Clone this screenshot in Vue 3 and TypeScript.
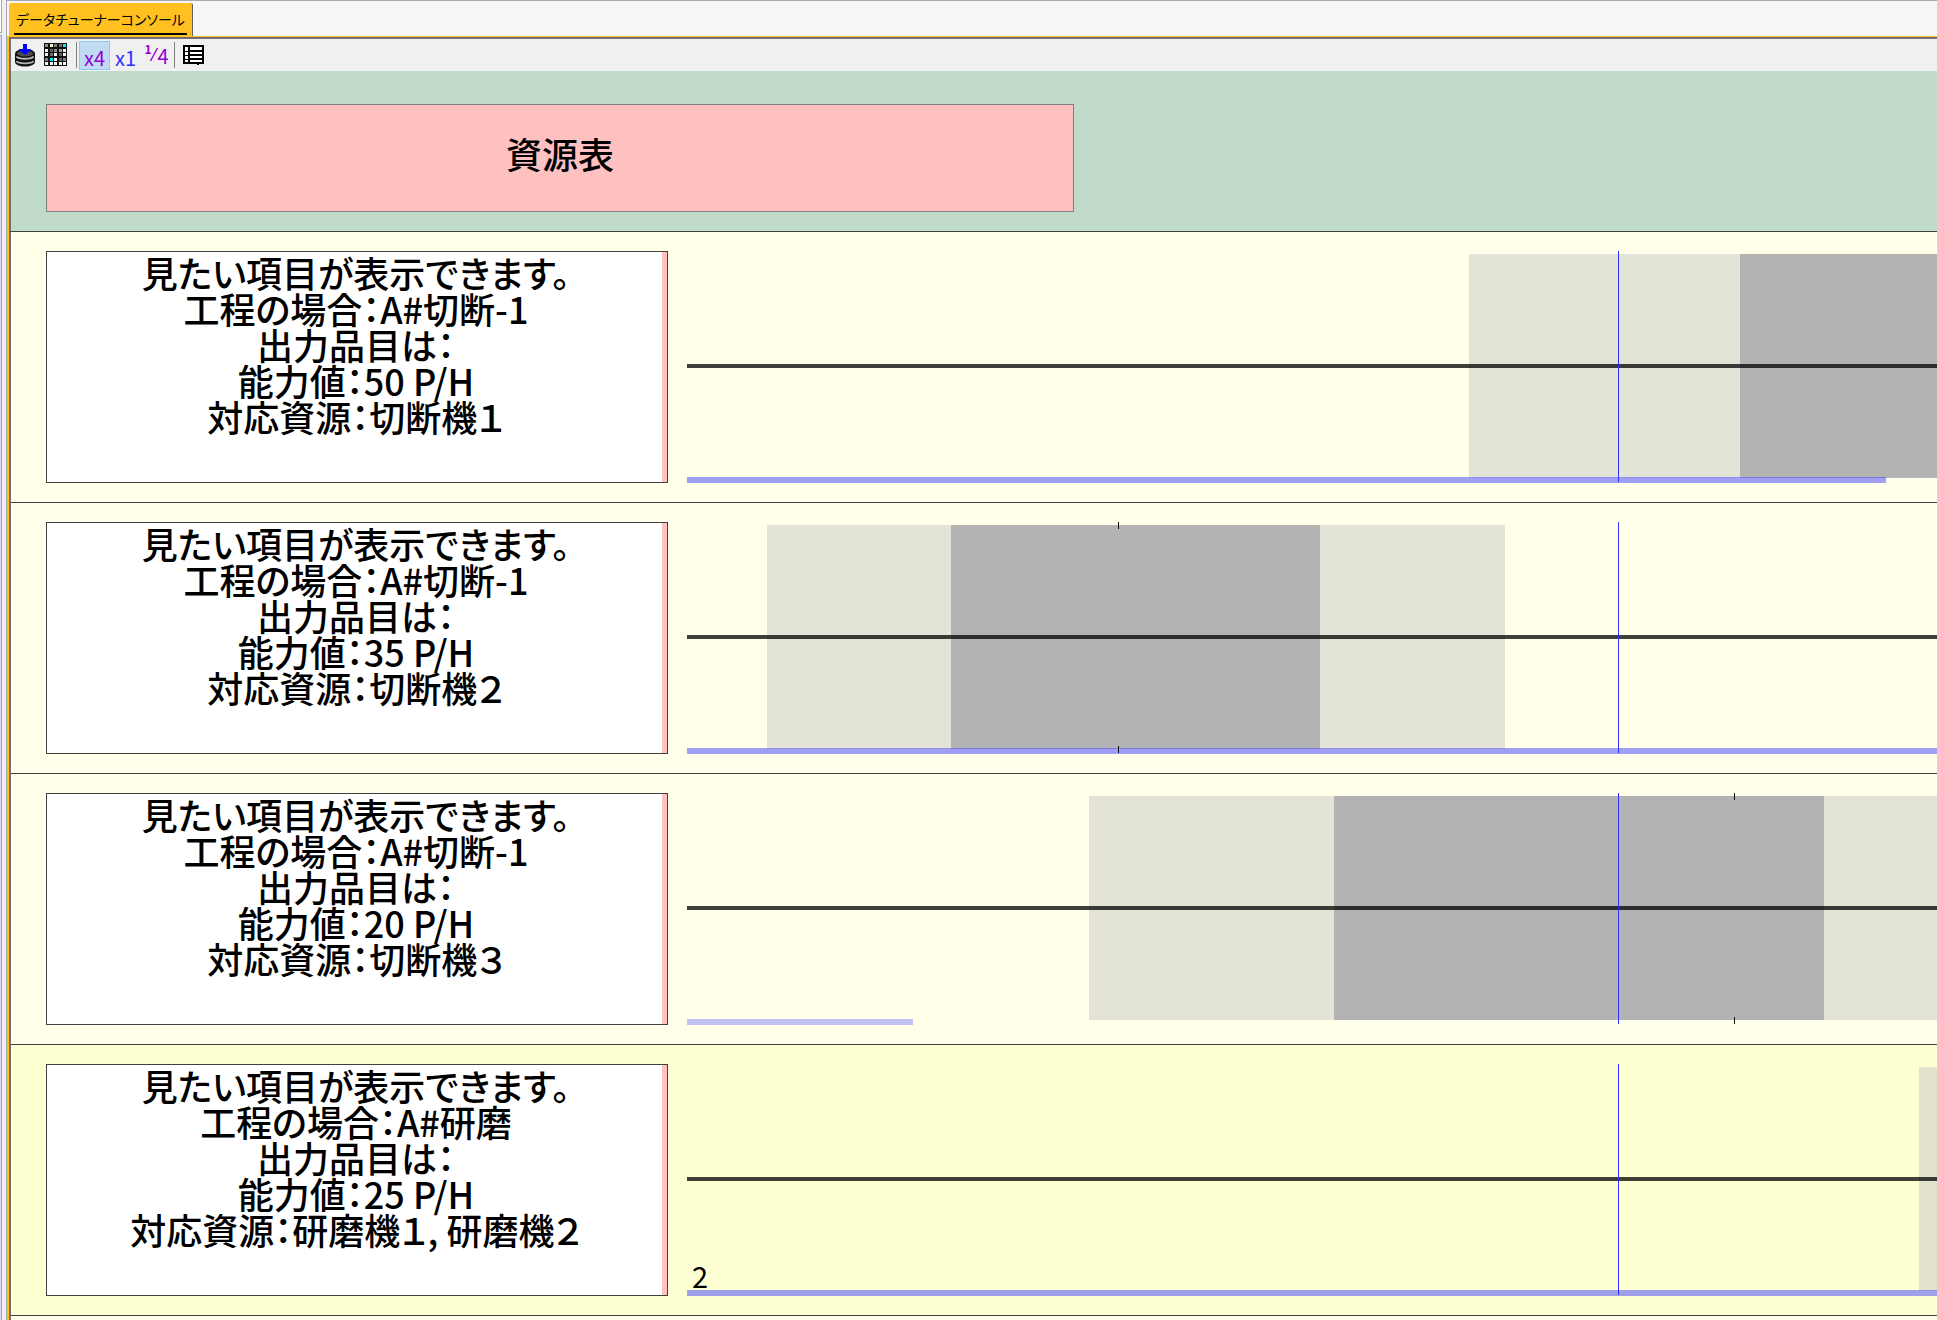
<script setup lang="ts">
import { ref } from 'vue'

type Shade = 'light' | 'dark'

interface Segment {
  start: number
  length: number
  shade: Shade
}

interface ResourceRow {
  id: number
  lines: string[]
  tinted: boolean
  segments: Segment[]
  load: { length: number; faint: boolean }
  ticks: number[]
  count: string
}

const FULL = 4000
const nowPosition = 931

const rows: ResourceRow[] = [
  {
    id: 1,
    lines: ['見たい項目が表示できます。', '工程の場合：A#切断-1', '出力品目は：', '能力値：50 P/H', '対応資源：切断機１'],
    tinted: false,
    segments: [
      { start: 782, length: 271, shade: 'light' },
      { start: 1053, length: FULL, shade: 'dark' },
    ],
    load: { length: 1199, faint: false },
    ticks: [],
    count: '',
  },
  {
    id: 2,
    lines: ['見たい項目が表示できます。', '工程の場合：A#切断-1', '出力品目は：', '能力値：35 P/H', '対応資源：切断機２'],
    tinted: false,
    segments: [
      { start: 80, length: 184, shade: 'light' },
      { start: 264, length: 369, shade: 'dark' },
      { start: 633, length: 185, shade: 'light' },
    ],
    load: { length: FULL, faint: false },
    ticks: [431],
    count: '',
  },
  {
    id: 3,
    lines: ['見たい項目が表示できます。', '工程の場合：A#切断-1', '出力品目は：', '能力値：20 P/H', '対応資源：切断機３'],
    tinted: false,
    segments: [
      { start: 402, length: 245, shade: 'light' },
      { start: 647, length: 490, shade: 'dark' },
      { start: 1137, length: FULL, shade: 'light' },
    ],
    load: { length: 226, faint: true },
    ticks: [1047],
    count: '',
  },
  {
    id: 4,
    lines: ['見たい項目が表示できます。', '工程の場合：A#研磨', '出力品目は：', '能力値：25 P/H', '対応資源：研磨機１, 研磨機２'],
    tinted: true,
    segments: [{ start: 1232, length: FULL, shade: 'light' }],
    load: { length: FULL, faint: false },
    ticks: [],
    count: '2',
  },
]

const scale = ref<'x4' | 'x1' | 'quarter'>('x4')

const W = '#f4f4ec'
const G = '#606060'
const gridCells: string[][] = [
  ['#909090', '#ffffd0', '#808080', '#707070', '#00f0ff'],
  [W, G, '#909090', '#a0a0a0', W],
  [W, '#707070', W, G, W],
  ['#808080', '#00f0ff', W, G, '#808080'],
  [W, W, W, W, W],
]
</script>

<template>
  <div class="app">
    <div class="rail" aria-hidden="true">
      <span class="rail-top"></span>
      <span class="rail-body"></span>
    </div>
    <div class="window">
      <nav class="tabs">
        <button type="button" class="tab"><span class="tab-text">データチューナーコンソール</span></button>
      </nav>
      <div class="pane">
        <div class="toolbar" role="toolbar">
          <button type="button" class="tool" aria-label="データ取込">
            <svg width="22" height="24" viewBox="0 0 22 24">
              <path d="M1 11v8c0 2.500 4.500 4.500 10 4.500s10-2 10-4.500v-8z" fill="#111" />
              <ellipse cx="11" cy="10.500" rx="10" ry="4.500" fill="#111" />
              <ellipse cx="11" cy="10.500" rx="8" ry="3" fill="#4c4c4c" />
              <path d="M2.500 13.500c2 3 15 3 17 0M2.500 18c2 3 15 3 17 0" fill="none" stroke="#b4b4b4" stroke-width="2" />
              <path d="M2 16.500c3 3 15 3 18 0" fill="none" stroke="#111" stroke-width="1" />
              <path d="M9 1h4v5h4l-1 2-5 4-5-4-1-2h4z" fill="#0000ff" />
            </svg>
          </button>
          <button type="button" class="tool" aria-label="グリッド">
            <svg width="24" height="24" viewBox="0 0 24 24" shape-rendering="crispEdges">
              <rect x="0" y="0" width="23" height="23" fill="#111" />
              <template v-for="(line, r) in gridCells" :key="r">
                <rect
                  v-for="(fill, c) in line"
                  :key="c"
                  :x="1 + c * 4.500"
                  :y="1 + r * 4.500"
                  width="3"
                  height="3"
                  :fill="fill"
                />
              </template>
            </svg>
          </button>
          <span class="divider"></span>
          <div class="zooms">
            <button type="button" class="zoom low violet" :class="{ active: scale === 'x4' }" @click="scale = 'x4'">x4</button>
            <button type="button" class="zoom low blue" :class="{ active: scale === 'x1' }" @click="scale = 'x1'">x1</button>
            <button type="button" class="zoom violet" :class="{ active: scale === 'quarter' }" @click="scale = 'quarter'">
              <span class="numerator">1</span>
              <svg class="slash" width="8" height="16" viewBox="0 0 8 16"><path d="M7.500 1L.5 14" stroke="currentColor" stroke-width="1.300" /></svg>
              <span>4</span>
            </button>
          </div>
          <span class="divider"></span>
          <button type="button" class="tool list" aria-label="一覧">
            <svg width="21" height="21" viewBox="0 0 21 21" shape-rendering="crispEdges">
              <rect x="1" y="1" width="19" height="17" fill="#fff" stroke="#000" stroke-width="2" />
              <path d="M6 1v17M6 6h13M6 10h13M6 14h13" fill="none" stroke="#000" stroke-width="2" />
              <path d="M2 6h4M2 10h4M2 14h4" stroke="#000" stroke-width="1" />
              <path d="M14 19h2v1h-2z" fill="#000" />
            </svg>
          </button>
        </div>
        <header class="heading">
          <h1 class="title">資源表</h1>
        </header>
        <main class="chart">
          <section v-for="row in rows" :key="row.id" class="row" :class="{ tinted: row.tinted }">
            <div class="card">
              <p v-for="line in row.lines" :key="line" class="line">{{ line }}</p>
            </div>
            <div class="track">
              <span
                v-for="seg in row.segments"
                :key="seg.start"
                class="segment"
                :class="seg.shade"
                :style="{ left: seg.start + 'px', width: seg.length + 'px' }"
              ></span>
              <span class="axis"></span>
              <span class="load" :class="{ faint: row.load.faint }" :style="{ width: row.load.length + 'px' }"></span>
              <span v-for="t in row.ticks" :key="t" class="tick" :style="{ left: t + 'px' }"></span>
              <span class="now" :style="{ left: nowPosition + 'px' }"></span>
              <span v-if="row.count" class="count">{{ row.count }}</span>
            </div>
          </section>
        </main>
      </div>
    </div>
  </div>
</template>

<style>
body {
  margin: 0;
  background: #f7f7f7;
}
</style>

<style scoped>
.app {
  display: flex;
  height: 100vh;
  overflow: hidden;
  font-family: 'Noto Sans CJK JP', sans-serif;
  font-feature-settings: 'palt';
  color: #000;
}

button {
  margin: 0;
  padding: 0;
  border: 0;
  background: none;
  font: inherit;
  font-feature-settings: inherit;
}

.rail {
  display: flex;
  flex-direction: column;
  flex: none;
  gap: 2px;
  width: 6px;
  border-right: 1px solid #a8a8a8;
  background: #f0f0f0;
}

.rail-top {
  width: 1px;
  height: 32px;
  border-right: 1px solid #a8a8a8;
  border-bottom: 1px solid #a8a8a8;
  background: #fff;
}

.rail-body {
  flex: 1;
  width: 1px;
  border-right: 1px solid #a0a0b8;
  border-top: 1px solid #a0a0b8;
  background: #dcdcff;
}

.window {
  display: flex;
  flex: 1;
  flex-direction: column;
  min-width: 0;
  border-top: 1px solid #a8a8a8;
}

.tabs {
  display: flex;
  align-items: flex-end;
  height: 35px;
  padding-left: 2px;
  background: #f7f7f7;
}

.tab {
  height: 33px;
  padding: 0 5px;
  border-right: 1px solid #606060;
  border-radius: 2px 2px 0 0;
  background: #ffc020;
}

.tab-text {
  display: block;
  height: 29px;
  padding: 0 2px;
  border-bottom: 2px solid #000;
  font-size: 14px;
  line-height: 30px;
  white-space: nowrap;
}

.pane {
  display: flex;
  flex: 1;
  flex-direction: column;
  min-height: 0;
  border-top: 1px solid #ffc020;
  border-left: 2px solid #ffc020;
}

.toolbar {
  display: flex;
  align-items: center;
  height: 32px;
  padding-left: 3px;
  border-top: 2px solid #707070;
  border-left: 2px solid #707070;
  background: #f0f0f0;
}

.tool {
  display: flex;
  margin-right: 8px;
}

.list {
  margin-left: 8px;
}

.divider {
  width: 1px;
  height: 26px;
  background: #808080;
}

.zooms {
  display: flex;
  margin: 0 2px;
}

.zoom {
  display: flex;
  align-items: center;
  justify-content: center;
  box-sizing: border-box;
  width: 31px;
  height: 29px;
  border: 1px solid transparent;
  font-size: 20px;
  line-height: 27px;
}

.zoom.low {
  padding-top: 5px;
}

.zoom.active {
  border-color: #90c8f6;
  background: #c0dcf3;
}

.violet {
  color: #9400d3;
}

.blue {
  color: #3030ff;
}

.numerator {
  padding-bottom: 12px;
  font-size: 12px;
  font-weight: 700;
  line-height: 12px;
}

.slash {
  margin: 0 -1px;
}

.heading {
  padding: 33px 35px 19px;
  border-bottom: 1px solid #404040;
  border-left: 2px solid #707070;
  background: #c0dbc9;
}

.title {
  box-sizing: border-box;
  width: 1028px;
  height: 108px;
  margin: 0;
  border: 1px solid #808080;
  background: #ffc0c0;
  font-size: 36px;
  font-weight: 500;
  line-height: 96px;
  text-align: center;
}

.chart {
  flex: 1;
  min-height: 0;
  overflow: hidden;
  border-left: 2px solid #707070;
  background: #ffffea;
}

.row {
  display: flex;
  gap: 19px;
  padding: 19px 0 19px 35px;
  border-bottom: 1px solid #404040;
}

.tinted {
  background: #ffffd4;
}

.card {
  box-sizing: border-box;
  flex: none;
  width: 622px;
  height: 232px;
  padding: 2px 0;
  border: 1px solid #404040;
  background: linear-gradient(to left, #ffc0c0 5px, #fff 5px);
}

.line {
  margin: 0;
  padding-right: 2px;
  font-size: 36px;
  font-weight: 500;
  line-height: 36px;
  text-align: center;
  white-space: nowrap;
}

.track {
  position: relative;
  flex: 1;
  min-width: 0;
}

.segment {
  position: absolute;
  top: 3px;
  height: 224px;
}

.light {
  background: rgba(192, 192, 192, 0.45);
}

.dark {
  background: #b3b3b3;
}

.axis {
  position: absolute;
  top: 113px;
  left: 0;
  width: 100%;
  height: 4px;
  background: rgba(0, 0, 0, 0.75);
}

.load {
  position: absolute;
  top: 226px;
  left: 0;
  height: 6px;
  background: rgba(64, 64, 255, 0.5);
}

.load.faint {
  background: rgba(64, 64, 255, 0.33);
}

.tick {
  position: absolute;
  top: 0;
  width: 1px;
  height: 217px;
  border-top: 7px solid #101010;
  border-bottom: 7px solid #101010;
}

.now {
  position: absolute;
  top: 0;
  width: 1px;
  height: 231px;
  background: #3030ff;
}

.count {
  position: absolute;
  bottom: 6px;
  left: 5px;
  font-size: 29px;
  line-height: 29px;
}
</style>
